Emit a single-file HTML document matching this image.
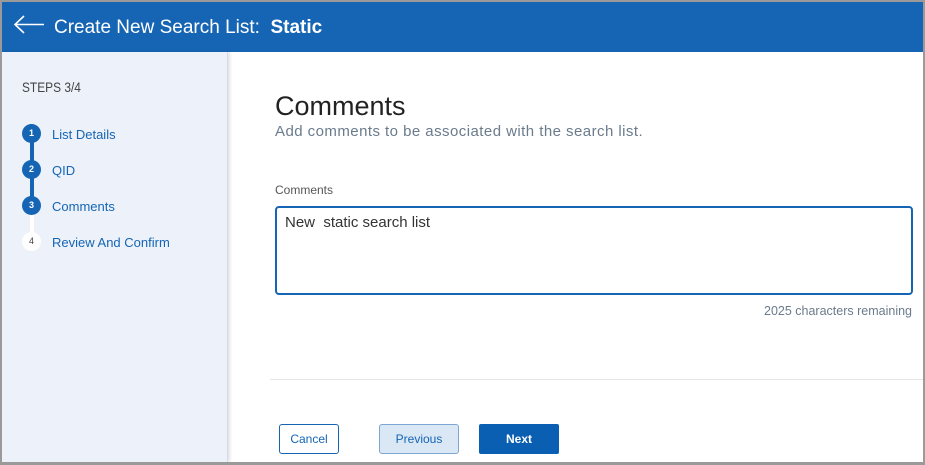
<!DOCTYPE html>
<html><head><meta charset="utf-8"><style>
*{margin:0;padding:0;box-sizing:border-box}
body{width:925px;height:465px;overflow:hidden;background:#fff;font-family:"Liberation Sans",sans-serif;position:relative}
.frame{position:absolute;left:0;top:0;width:925px;height:465px;border:2px solid #9a9a9a;border-bottom:3px solid #9a9a9a}
.hdr{position:absolute;left:2px;top:2px;width:921px;height:50px;background:#1565b4;color:#fff}
.hdr .t{position:absolute;left:52px;top:15px;font-size:19px;white-space:nowrap}
.side{position:absolute;left:2px;top:52px;width:226px;height:410px;background:#edf2fa;border-right:1px solid #d6dbe3;box-shadow:2px 0 3px rgba(0,0,0,.12)}
.steps{position:absolute;left:22px;top:79px;font-size:14px;color:#444;transform:scaleX(.85);transform-origin:left}
.st{position:absolute;left:52px;font-size:13px;color:#1565b4}
.c{position:absolute;left:22px;width:19px;height:19px;border-radius:50%;background:#1565b4;color:#fff;font-size:9px;font-weight:bold;text-align:center;line-height:19px}
.line{position:absolute;left:30px;width:4px;background:#1565b4}
h1{position:absolute;left:275px;top:91px;font-size:27px;font-weight:normal;color:#222}
.sub{position:absolute;left:275px;top:123px;font-size:15px;letter-spacing:.45px;color:#6a7b8c}
.lbl{position:absolute;left:275px;top:183px;font-size:12px;color:#555}
.ta{position:absolute;left:275px;top:206px;width:638px;height:89px;border:2px solid #1565b4;border-radius:4px;padding:6px 8px;font-size:15px;color:#333}
.rem{position:absolute;right:13px;top:304px;font-size:12.5px;color:#6a7b8c}
.hr{position:absolute;left:270px;top:379px;width:653px;height:1px;background:#e6e6e6}
.b{position:absolute;top:424px;width:60px;height:30px;border-radius:2px;font-size:12px;text-align:center;line-height:28px}
</style></head><body>
<div class="hdr">
<svg style="position:absolute;left:11px;top:12px" width="32" height="22" viewBox="0 0 32 22"><path d="M31 10.5H2M11 2L2 10.5l9 8.5" fill="none" stroke="#fff" stroke-width="1.6"/></svg>
<div class="t">Create New Search List:&nbsp; <b>Static</b></div>
</div>
<div class="side"></div>
<div class="steps">STEPS 3/4</div>
<div class="line" style="top:134px;height:72px"></div>
<div class="line" style="top:206px;height:36px;background:#fff"></div>
<div class="c" style="top:124px">1</div><div class="st" style="top:127px">List Details</div>
<div class="c" style="top:160px">2</div><div class="st" style="top:163px">QID</div>
<div class="c" style="top:196px">3</div><div class="st" style="top:199px">Comments</div>
<div class="c" style="top:232px;background:#fff;color:#444;font-weight:normal">4</div><div class="st" style="top:235px">Review And Confirm</div>
<h1>Comments</h1>
<div class="sub">Add comments to be associated with the search list.</div>
<div class="lbl">Comments</div>
<div class="ta">New&nbsp; static search list</div>
<div class="rem">2025 characters remaining</div>
<div class="hr"></div>
<div class="b" style="left:279px;border:1px solid #1565b4;color:#1565b4;background:#fff;border-radius:3px">Cancel</div>
<div class="b" style="left:379px;width:80px;border:1px solid #7ea6d4;color:#1565b4;background:#dae7f5;border-radius:3px">Previous</div>
<div class="b" style="left:479px;width:80px;background:#0b5fb3;color:#fff;font-weight:bold;line-height:30px">Next</div>
<div class="frame"></div>
</body></html>
